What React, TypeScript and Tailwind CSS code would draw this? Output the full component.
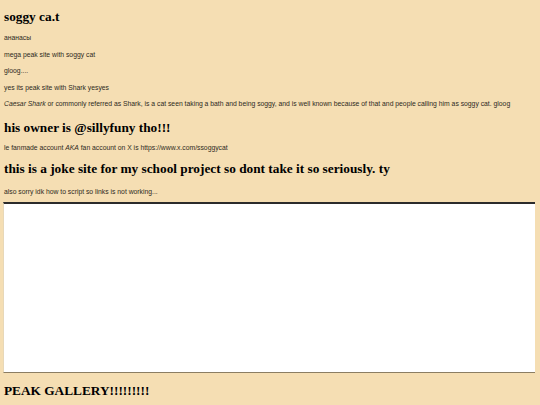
import React from 'react';

const body = "font-['Comic_Sans_MS','Liberation_Sans',sans-serif] text-[6.8px] leading-[8px] text-[#2e2a22]";
const head = "font-['Liberation_Serif',serif] font-bold text-black text-[13.3px] leading-[18px]";

const App: React.FC = () => {
  return (
    <div className="min-h-[405px] w-[540px] bg-[#f5deb3] px-[4px] pt-[8px] overflow-hidden">
      <h1 className={head}>soggy ca.t</h1>
      <p className={`${body} mt-[8px]`}>ананасы</p>
      <p className={`${body} mt-[9px]`}>mega peak site with soggy cat</p>
      <p className={`${body} mt-[8px]`}>gloog....</p>
      <p className={`${body} mt-[9px]`}>yes its peak site with Shark yesyes</p>
      <p className={`${body} mt-[8px]`}>
        <em>Caesar Shark</em> or commonly referred as Shark, is a cat seen taking a bath and being soggy, and is well known because of that and people calling him as soggy cat. gloog
      </p>
      <h2 className={`${head} mt-[11px]`}>his owner is @sillyfuny tho!!!</h2>
      <p className={`${body} mt-[7px]`}>
        le fanmade account <em>AKA</em> fan account on X is https://www.x.com/ssoggycat
      </p>
      <h2 className={`${head} mt-[8px]`}>
        this is a joke site for my school project so dont take it so seriously. ty
      </h2>
      <p className={`${body} mt-[10px]`}>also sorry idk how to script so links is not working...</p>
      <div className="mt-[6px] h-[171px] w-[532px] -ml-[1px] bg-white border-t-2 border-t-[#2b2b2b] border-l border-l-[#e8d8b8] border-b border-b-[#8b7d63]" />
      <h2 className={`${head} mt-[9px]`}>PEAK GALLERY!!!!!!!!!</h2>
    </div>
  );
};

export default App;
